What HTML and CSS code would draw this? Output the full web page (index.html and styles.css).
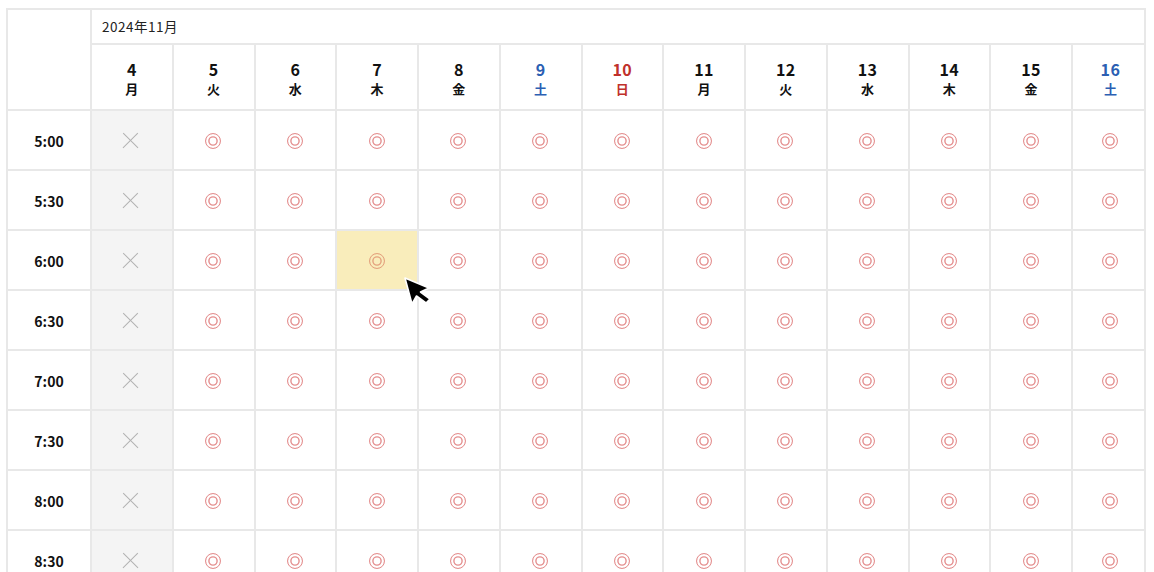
FILE: index.html
```html
<!DOCTYPE html>
<html lang="ja">
<head>
<meta charset="utf-8">
<link rel="stylesheet" href="styles.css">
</head>
<body>
<div class="wrap">
<div class="cal">
  <div class="corner"></div>
  <div class="month">2024年11月</div>
  <div class="day"><b>4</b><span>月</span></div>
  <div class="day"><b>5</b><span>火</span></div>
  <div class="day"><b>6</b><span>水</span></div>
  <div class="day"><b>7</b><span>木</span></div>
  <div class="day"><b>8</b><span>金</span></div>
  <div class="day sat"><b>9</b><span>土</span></div>
  <div class="day sun"><b>10</b><span>日</span></div>
  <div class="day"><b>11</b><span>月</span></div>
  <div class="day"><b>12</b><span>火</span></div>
  <div class="day"><b>13</b><span>水</span></div>
  <div class="day"><b>14</b><span>木</span></div>
  <div class="day"><b>15</b><span>金</span></div>
  <div class="day sat"><b>16</b><span>土</span></div>

  <div class="time">5:00</div>
  <div class="c ng"></div><div class="c ok"></div><div class="c ok"></div><div class="c ok"></div><div class="c ok"></div><div class="c ok"></div><div class="c ok"></div><div class="c ok"></div><div class="c ok"></div><div class="c ok"></div><div class="c ok"></div><div class="c ok"></div><div class="c ok"></div>

  <div class="time">5:30</div>
  <div class="c ng"></div><div class="c ok"></div><div class="c ok"></div><div class="c ok"></div><div class="c ok"></div><div class="c ok"></div><div class="c ok"></div><div class="c ok"></div><div class="c ok"></div><div class="c ok"></div><div class="c ok"></div><div class="c ok"></div><div class="c ok"></div>

  <div class="time">6:00</div>
  <div class="c ng"></div><div class="c ok"></div><div class="c ok"></div><div class="c ok hover"></div><div class="c ok"></div><div class="c ok"></div><div class="c ok"></div><div class="c ok"></div><div class="c ok"></div><div class="c ok"></div><div class="c ok"></div><div class="c ok"></div><div class="c ok"></div>

  <div class="time">6:30</div>
  <div class="c ng"></div><div class="c ok"></div><div class="c ok"></div><div class="c ok"></div><div class="c ok"></div><div class="c ok"></div><div class="c ok"></div><div class="c ok"></div><div class="c ok"></div><div class="c ok"></div><div class="c ok"></div><div class="c ok"></div><div class="c ok"></div>

  <div class="time">7:00</div>
  <div class="c ng"></div><div class="c ok"></div><div class="c ok"></div><div class="c ok"></div><div class="c ok"></div><div class="c ok"></div><div class="c ok"></div><div class="c ok"></div><div class="c ok"></div><div class="c ok"></div><div class="c ok"></div><div class="c ok"></div><div class="c ok"></div>

  <div class="time">7:30</div>
  <div class="c ng"></div><div class="c ok"></div><div class="c ok"></div><div class="c ok"></div><div class="c ok"></div><div class="c ok"></div><div class="c ok"></div><div class="c ok"></div><div class="c ok"></div><div class="c ok"></div><div class="c ok"></div><div class="c ok"></div><div class="c ok"></div>

  <div class="time">8:00</div>
  <div class="c ng"></div><div class="c ok"></div><div class="c ok"></div><div class="c ok"></div><div class="c ok"></div><div class="c ok"></div><div class="c ok"></div><div class="c ok"></div><div class="c ok"></div><div class="c ok"></div><div class="c ok"></div><div class="c ok"></div><div class="c ok"></div>

  <div class="time">8:30</div>
  <div class="c ng"></div><div class="c ok"></div><div class="c ok"></div><div class="c ok"></div><div class="c ok"></div><div class="c ok"></div><div class="c ok"></div><div class="c ok"></div><div class="c ok"></div><div class="c ok"></div><div class="c ok"></div><div class="c ok"></div><div class="c ok"></div>
</div>
</div>

<svg class="cursor" width="30" height="32" viewBox="0 0 30 32">
  <path d="M2 2 L9 28 L13.5 20 L23 27 L27 23 L17.5 16 L26 12 Z" fill="#000" stroke="#fff" stroke-width="1.6" stroke-linejoin="round"/>
</svg>
</body>
</html>
```

FILE: styles.css
```css
html, body {
  margin: 0;
  padding: 0;
  background: #fff;
  overflow: hidden;
}
body {
  font-family: "Noto Sans CJK JP", "Noto Sans", sans-serif;
  color: #111;
  position: relative;
  height: 572px;
}
.wrap {
  width: 1140px;
  margin: 8px 0 0 6px;
  overflow: hidden;
  border-top: 2px solid #e8e8e8;
  border-left: 2px solid #e8e8e8;
  border-right: 2px solid #e8e8e8;
  box-sizing: border-box;
}
.cal {
  display: grid;
  grid-template-columns: 84px repeat(12, 81.75px) 77px;
  grid-template-rows: 35px 66px repeat(8, 60px);
  width: 1142px;
}
.cal > div {
  border-right: 2px solid #e8e8e8;
  border-bottom: 2px solid #e8e8e8;
  box-sizing: border-box;
  display: flex;
  align-items: center;
  justify-content: center;
  position: relative;
  padding-top: 1px;
}
.corner {
  grid-row: 1 / 3;
  grid-column: 1;
}
.cal > .month {
  grid-column: 2 / -1;
  justify-content: flex-start;
  padding: 0 0 2px 10px;
  font-size: 13.5px;
  letter-spacing: 0.5px;
  color: #222;
}
.cal > .day {
  flex-direction: column;
  padding-top: 3px;
}
.day b {
  font-size: 16px;
  font-weight: 700;
  line-height: 20px;
  letter-spacing: 0.5px;
}
.day span {
  font-size: 13px;
  font-weight: 700;
  line-height: 19px;
}
.sat { color: #2c5fb3; }
.sun { color: #c0302b; }
.time {
  font-size: 14px;
  font-weight: 700;
}
.cal > .ng { background: #f4f4f4; }
.ng::before,
.ng::after {
  content: "";
  position: absolute;
  left: 50%;
  top: 50%;
  width: 21px;
  height: 1.3px;
  margin: -0.15px 0 0 -11.5px;
  background: #b2b2b2;
  transform: rotate(45deg);
}
.ng::after { transform: rotate(-45deg); }
.ok::before {
  content: "";
  width: 16px;
  height: 16px;
  box-sizing: border-box;
  border-radius: 50%;
  border: 1.4px solid #e48e8e;
  box-shadow: inset 0 0 0 2.2px #fff, inset 0 0 0 3.6px #e48e8e;
  margin-left: -1px;
}
.cal > .hover { background: #f9edbb; }
.hover::before {
  border-color: #e4a27d;
  box-shadow: inset 0 0 0 2.2px #f9edbb, inset 0 0 0 3.6px #e4a27d;
}
.cursor {
  position: absolute;
  left: 403px;
  top: 276px;
}
```
